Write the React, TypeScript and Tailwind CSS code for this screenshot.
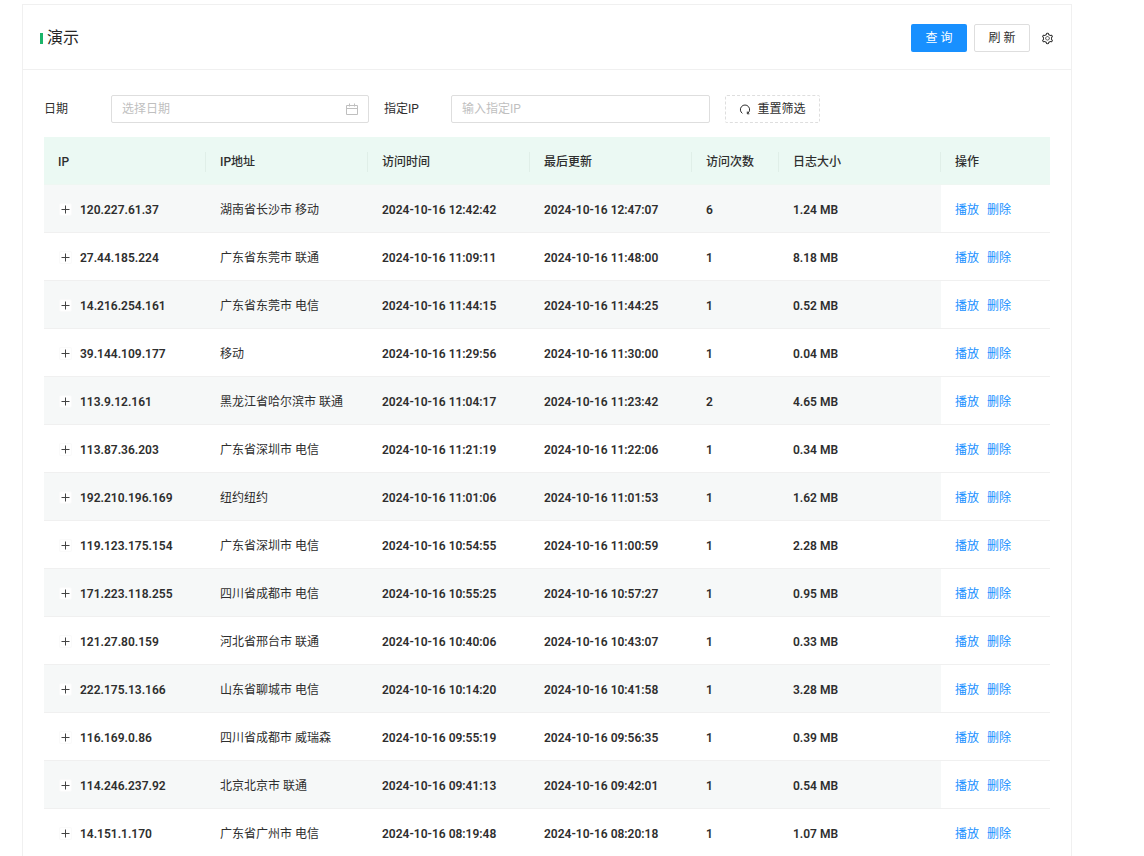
import React from "react";
import { AiOutlineSetting } from "react-icons/ai";

type LogRow = {
  ip: string;
  region: string;
  visitedAt: string;
  updatedAt: string;
  visits: number;
  size: string;
};

const rows: LogRow[] = [
  { ip: "120.227.61.37", region: "湖南省长沙市 移动", visitedAt: "2024-10-16 12:42:42", updatedAt: "2024-10-16 12:47:07", visits: 6, size: "1.24 MB" },
  { ip: "27.44.185.224", region: "广东省东莞市 联通", visitedAt: "2024-10-16 11:09:11", updatedAt: "2024-10-16 11:48:00", visits: 1, size: "8.18 MB" },
  { ip: "14.216.254.161", region: "广东省东莞市 电信", visitedAt: "2024-10-16 11:44:15", updatedAt: "2024-10-16 11:44:25", visits: 1, size: "0.52 MB" },
  { ip: "39.144.109.177", region: "移动", visitedAt: "2024-10-16 11:29:56", updatedAt: "2024-10-16 11:30:00", visits: 1, size: "0.04 MB" },
  { ip: "113.9.12.161", region: "黑龙江省哈尔滨市 联通", visitedAt: "2024-10-16 11:04:17", updatedAt: "2024-10-16 11:23:42", visits: 2, size: "4.65 MB" },
  { ip: "113.87.36.203", region: "广东省深圳市 电信", visitedAt: "2024-10-16 11:21:19", updatedAt: "2024-10-16 11:22:06", visits: 1, size: "0.34 MB" },
  { ip: "192.210.196.169", region: "纽约纽约", visitedAt: "2024-10-16 11:01:06", updatedAt: "2024-10-16 11:01:53", visits: 1, size: "1.62 MB" },
  { ip: "119.123.175.154", region: "广东省深圳市 电信", visitedAt: "2024-10-16 10:54:55", updatedAt: "2024-10-16 11:00:59", visits: 1, size: "2.28 MB" },
  { ip: "171.223.118.255", region: "四川省成都市 电信", visitedAt: "2024-10-16 10:55:25", updatedAt: "2024-10-16 10:57:27", visits: 1, size: "0.95 MB" },
  { ip: "121.27.80.159", region: "河北省邢台市 联通", visitedAt: "2024-10-16 10:40:06", updatedAt: "2024-10-16 10:43:07", visits: 1, size: "0.33 MB" },
  { ip: "222.175.13.166", region: "山东省聊城市 电信", visitedAt: "2024-10-16 10:14:20", updatedAt: "2024-10-16 10:41:58", visits: 1, size: "3.28 MB" },
  { ip: "116.169.0.86", region: "四川省成都市 威瑞森", visitedAt: "2024-10-16 09:55:19", updatedAt: "2024-10-16 09:56:35", visits: 1, size: "0.39 MB" },
  { ip: "114.246.237.92", region: "北京北京市 联通", visitedAt: "2024-10-16 09:41:13", updatedAt: "2024-10-16 09:42:01", visits: 1, size: "0.54 MB" },
  { ip: "14.151.1.170", region: "广东省广州市 电信", visitedAt: "2024-10-16 08:19:48", updatedAt: "2024-10-16 08:20:18", visits: 1, size: "1.07 MB" },
];

const columns = [
  { title: "IP", width: "w-[162px]" },
  { title: "IP地址", width: "w-[162px]" },
  { title: "访问时间", width: "w-[162px]" },
  { title: "最后更新", width: "w-[162px]" },
  { title: "访问次数", width: "w-[87px]" },
  { title: "日志大小", width: "w-[162px]" },
  { title: "操作", width: "w-[109px]" },
];

function CalendarIcon() {
  return (
    <svg viewBox="0 0 12 12" className="size-3 shrink-0 text-[#bfbfbf]" fill="none" stroke="currentColor" aria-hidden="true">
      <path d="M0.5 2.5h11v9h-11zM0.5 5.5h11M3.5 0.5v3M8.5 0.5v3" />
    </svg>
  );
}

function ResetIcon() {
  return (
    <svg viewBox="0 0 12 12" className="size-3" fill="none" stroke="currentColor" aria-hidden="true">
      <path d="M3.4 10.4A4.6 4.6 0 1 1 8.6 10.4" />
      <path d="M8.3 8.6v2.2h2" />
    </svg>
  );
}

function ExpandButton({ ip }: { ip: string }) {
  return (
    <button
      type="button"
      aria-label={`展开 ${ip}`}
      className="flex size-[13px] items-center justify-center rounded-xs border border-[#fafafa] bg-white text-[#444]"
    >
      <svg viewBox="0 0 9 9" className="size-[9px] shrink-0" stroke="currentColor" aria-hidden="true">
        <path d="M4.5 0.5v8M0.5 4.5h8" />
      </svg>
    </button>
  );
}

function Header() {
  return (
    <header className="flex h-[65px] items-center justify-between border-b border-[#f0f0f0] pt-[2px] pr-[17px] pl-[17px]">
      <h1 className="flex items-center gap-1 text-base text-[#262626]">
        <span className="h-[11px] w-[3px] bg-[#1cb56a]" />
        演示
      </h1>
      <div className="flex items-center">
        <button type="button" className="h-7 w-14 rounded-xs bg-[#1890ff] text-white">
          查 询
        </button>
        <button type="button" className="ml-[7px] h-7 w-14 rounded-xs border border-[#dedede]">
          刷 新
        </button>
        <button type="button" aria-label="设置" className="ml-[11px]">
          <AiOutlineSetting className="size-[13px]" />
        </button>
      </div>
    </header>
  );
}

function Filters() {
  return (
    <form className="flex flex-wrap items-center">
      <label htmlFor="date" className="w-[67px]">
        日期
      </label>
      <div className="flex h-7 w-[258px] items-center rounded-xs border border-[#dedede] px-[10px]">
        <input id="date" type="text" placeholder="选择日期" className="min-w-0 flex-1 outline-none placeholder:text-[#bfbfbf]" />
        <CalendarIcon />
      </div>
      <label htmlFor="target-ip" className="ml-[15px] w-[67px]">
        指定IP
      </label>
      <input
        id="target-ip"
        type="text"
        placeholder="输入指定IP"
        className="h-7 w-[259px] rounded-xs border border-[#dedede] px-[10px] outline-none placeholder:text-[#bfbfbf]"
      />
      <button
        type="button"
        className="ml-[15px] flex h-7 w-[95px] items-center justify-center gap-[6px] rounded-xs border border-dashed border-[#dedede]"
      >
        <ResetIcon />
        重置筛选
      </button>
    </form>
  );
}

function LogTable() {
  return (
    <table className="mt-[14px] w-full table-fixed border-separate border-spacing-0 text-left">
      <thead>
        <tr className="h-12 bg-[#ebf9f3]">
          {columns.map((col, i) => (
            <th key={col.title} scope="col" className={`${col.width} border-b border-[#eef7f2] p-0 pt-[2px] font-medium`}>
              <div
                className={
                  i < columns.length - 1
                    ? "flex h-5 items-center border-r border-[#e0efe8] pl-[14px]"
                    : "flex h-5 items-center pl-[14px]"
                }
              >
                {col.title}
              </div>
            </th>
          ))}
        </tr>
      </thead>
      <tbody className="[&_td]:border-b [&_td]:border-[#f0f0f0] [&_td]:p-0 [&_td]:pt-[2px] [&_td]:pl-[14px]">
        {rows.map((row) => (
          <tr key={row.ip} className="group h-12">
            <td className="font-semibold group-odd:bg-[#f6f8f8]">
              <div className="flex items-center gap-2 pl-[1px]">
                <ExpandButton ip={row.ip} />
                {row.ip}
              </div>
            </td>
            <td className="whitespace-nowrap group-odd:bg-[#f6f8f8]">{row.region}</td>
            <td className="font-semibold group-odd:bg-[#f6f8f8]">{row.visitedAt}</td>
            <td className="font-semibold group-odd:bg-[#f6f8f8]">{row.updatedAt}</td>
            <td className="font-semibold group-odd:bg-[#f6f8f8]">{row.visits}</td>
            <td className="font-semibold group-odd:bg-[#f6f8f8]">{row.size}</td>
            <td>
              <div className="flex gap-2 text-[#1890ff]">
                <a href="#play">播放</a>
                <a href="#delete">删除</a>
              </div>
            </td>
          </tr>
        ))}
      </tbody>
    </table>
  );
}

export default function App() {
  return (
    <main className="h-screen overflow-hidden bg-white pt-1 pr-[72px] pl-[22px] font-[Roboto,'Noto_Sans_CJK_SC',sans-serif] text-xs text-[#2e2e2e]">
      <section className="border border-b-0 border-[#f0f0f0]">
        <Header />
        <div className="px-[21px] pt-[25px]">
          <Filters />
          <LogTable />
        </div>
      </section>
    </main>
  );
}
